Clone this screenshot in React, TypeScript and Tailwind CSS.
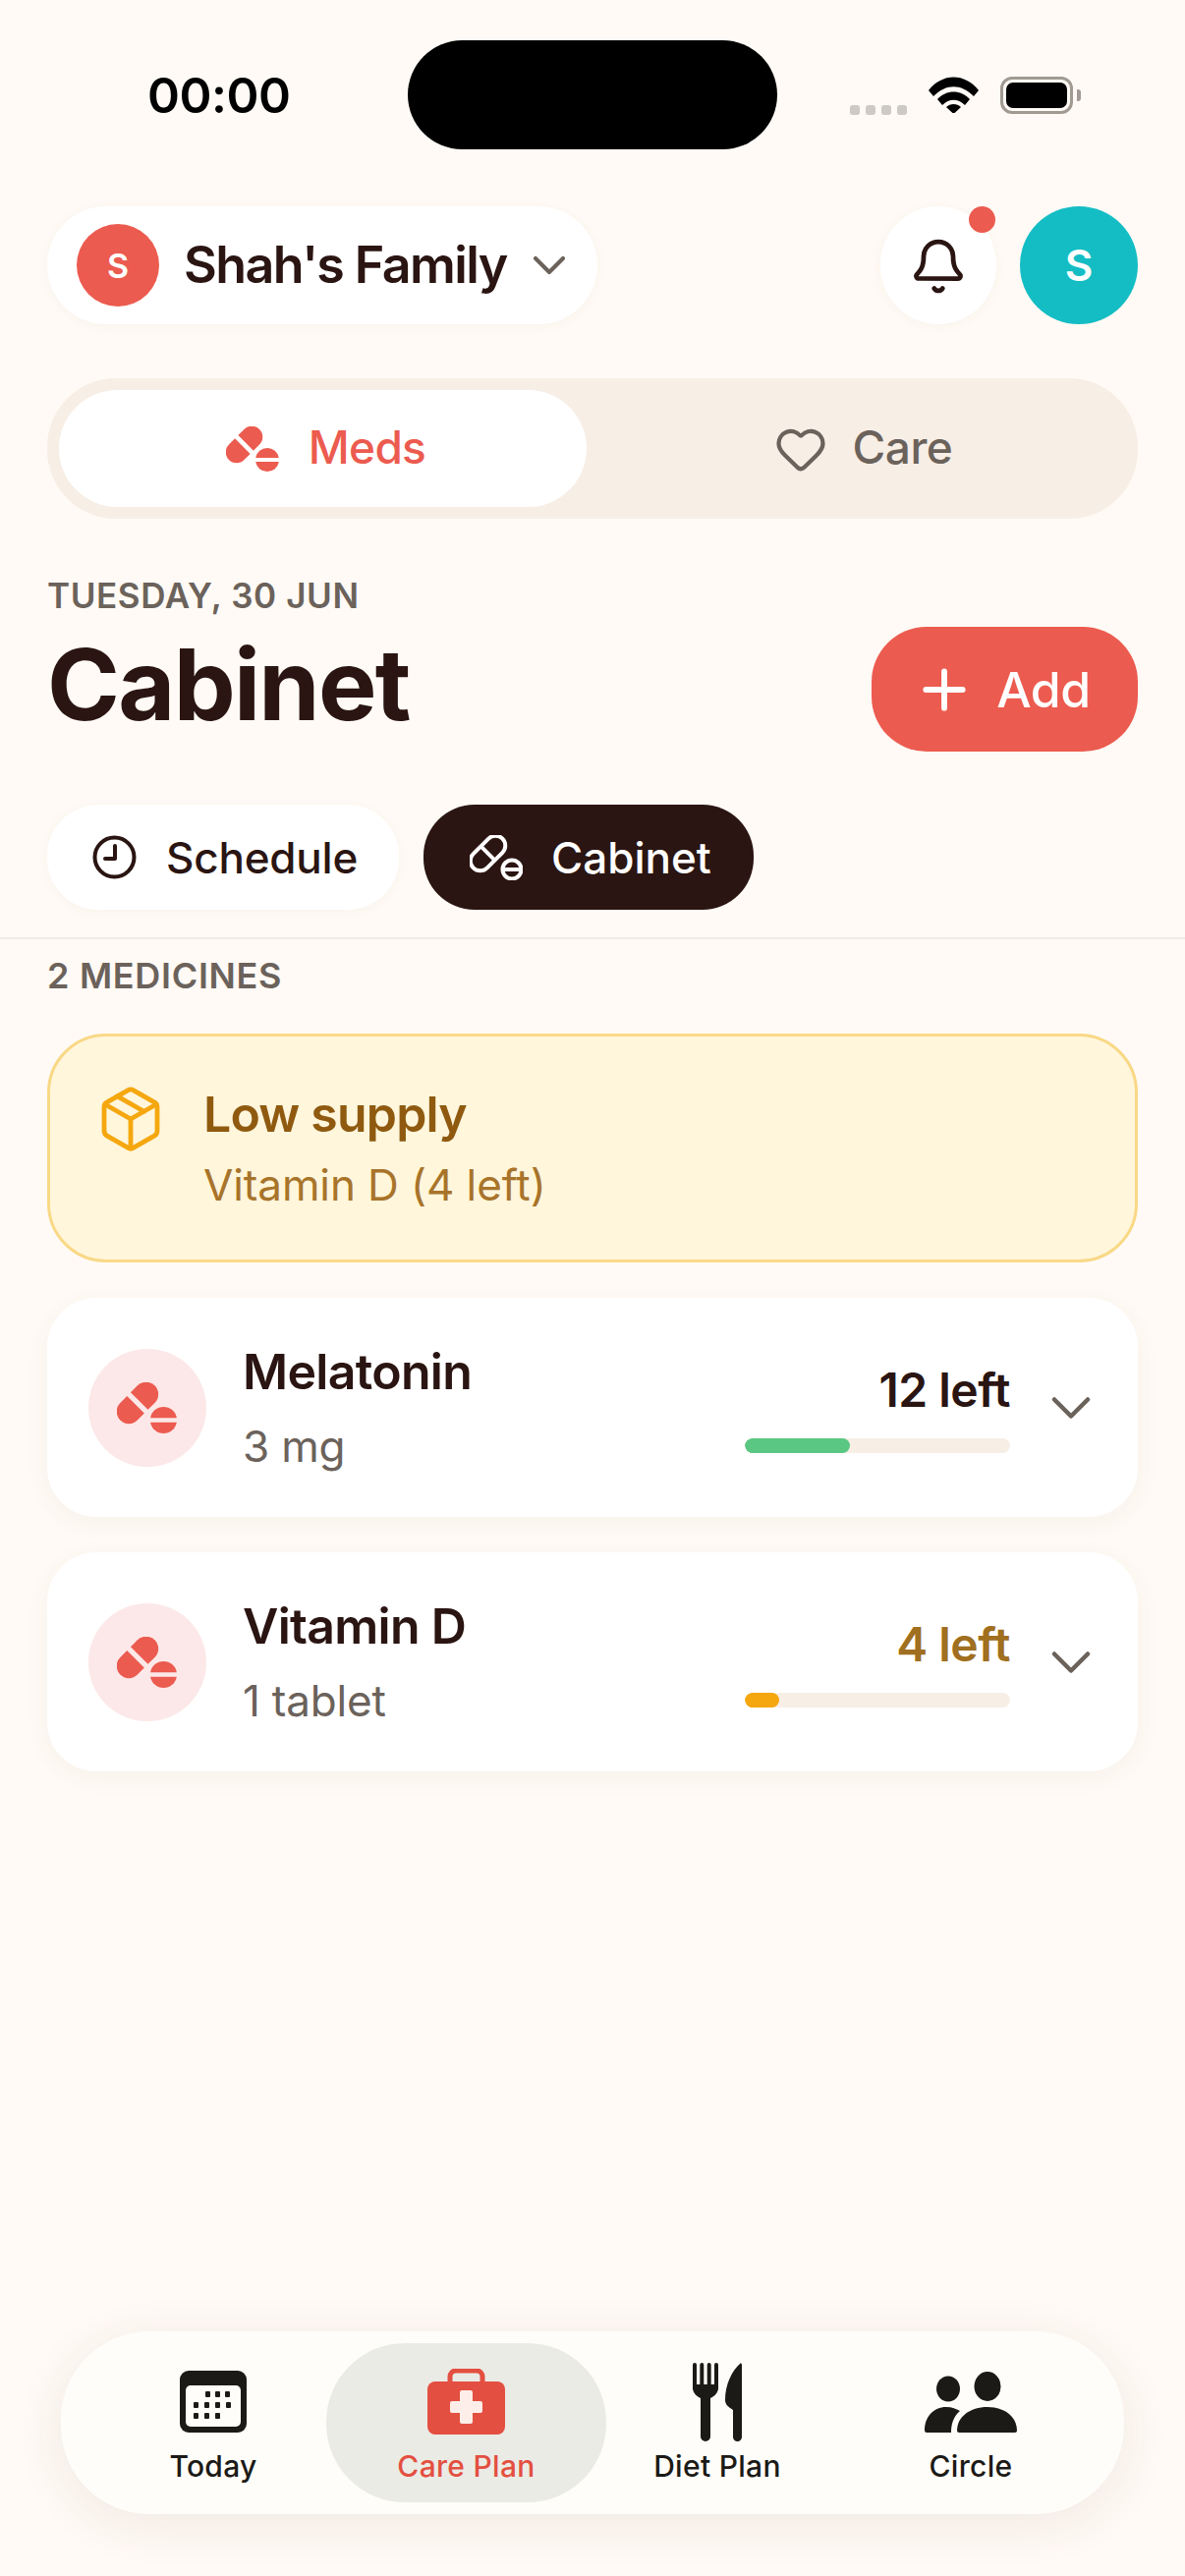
import { Bell, ChevronDown, Heart, Package, Plus } from "lucide-react";

function PillSolid({ className }: { className?: string }) {
  return (
    <svg viewBox="0 0 54 46" fill="currentColor" className={className}>
      <g transform="rotate(-45 18.5 18.5)">
        <path d="M16.2 7.5H7.5a11 11 0 0 0 0 22h8.7Z" />
        <path d="M20.8 7.5h8.7a11 11 0 0 1 0 22h-8.7Z" />
      </g>
      <path d="M30.17 32A12 12 0 0 1 53.83 32Z" />
      <path d="M30.17 36A12 12 0 0 0 53.83 36Z" />
    </svg>
  );
}

function PillOutline({ className }: { className?: string }) {
  return (
    <svg viewBox="0 0 54 46" fill="none" stroke="currentColor" strokeWidth="4" className={className}>
      <g transform="rotate(-45 18.5 18.5)">
        <rect x="-2.5" y="8.5" width="42" height="20" rx="10" />
        <path d="M18.5 8.5v20" />
      </g>
      <circle cx="43" cy="35" r="9.5" />
      <path d="M34 35h18" />
    </svg>
  );
}

function ClockIcon({ className }: { className?: string }) {
  return (
    <svg viewBox="0 0 45 45" fill="none" stroke="currentColor" strokeWidth="4" strokeLinecap="round" strokeLinejoin="round" className={className}>
      <circle cx="22.5" cy="22.5" r="20" />
      <path d="M23 11v13h-10" />
    </svg>
  );
}

function WifiIcon() {
  return (
    <svg viewBox="0 0 51 37" fill="#000" className="h-[37px] w-[51px]">
      <path d="M0 14 C14 -4 37 -4 51 14 L46 20 C33 7 18 7 5 20Z" />
      <path d="M9 23 C18 13 33 13 42 23 L37 29 C30 22 21 22 14 29Z" />
      <path d="M18 31 C22 27 29 27 33 31 L25.5 38Z" />
    </svg>
  );
}

function CalendarIcon() {
  const rows = [
    [26, 36, 46],
    [14, 25, 36, 47],
    [14, 25, 36],
  ];
  return (
    <svg viewBox="0 0 68 63" className="h-[63px] w-[68px]">
      <rect width="68" height="63" rx="9" fill="#1b1a17" />
      <rect x="6" y="15" width="56" height="42" rx="5" fill="#fffdf9" />
      {rows.map((xs, i) =>
        xs.map((x) => <rect key={`${i}-${x}`} x={x} y={21 + i * 11} width="5" height="6" rx="1" fill="#1b1a17" />),
      )}
    </svg>
  );
}

function CareIcon() {
  return (
    <svg viewBox="0 0 79 67" className="h-[67px] w-[79px]">
      <path d="M23 16V8a6 6 0 0 1 6-6h21a6 6 0 0 1 6 6v8" fill="none" stroke="#e34f40" strokeWidth="5" />
      <rect y="13" width="79" height="54" rx="8" fill="#e34f40" />
      <path d="M33 24a2 2 0 0 1 2-2h9a2 2 0 0 1 2 2v9h8a2 2 0 0 1 2 2v8a2 2 0 0 1-2 2h-8v9a2 2 0 0 1-2 2h-9a2 2 0 0 1-2-2v-9h-8a2 2 0 0 1-2-2v-8a2 2 0 0 1 2-2h8Z" fill="#fdeee9" />
    </svg>
  );
}

function DietIcon() {
  return (
    <svg viewBox="0 0 50 80" fill="#1b1a17" className="h-[80px] w-[50px]">
      <rect x="0" y="0" width="4" height="28" rx="2" />
      <rect x="7.3" y="0" width="4" height="28" rx="2" />
      <rect x="14.7" y="0" width="4" height="28" rx="2" />
      <rect x="22" y="0" width="4" height="28" rx="2" />
      <path d="M0 22H26V25C26 31 22 34 18 36V75a5 5 0 0 1-10 0V36C4 34 0 31 0 25Z" />
      <path d="M50 2V75.5a4.5 4.5 0 0 1-9 0V48C36 45 33 42 33 38 33 22 40 8 48 1 49 0 50 1 50 2Z" />
    </svg>
  );
}

function PeopleIcon() {
  return (
    <svg viewBox="0 0 94 62" fill="#1b1a17" className="h-[62px] w-[94px]">
      <ellipse cx="24" cy="17.5" rx="12" ry="13" />
      <ellipse cx="64" cy="15" rx="13.5" ry="15" />
      <path d="M0 60C0 46 9 36 22 36c6 0 10 2 14 4C29 46 27 54 27 62H2C1 62 0 61 0 60Z" />
      <path d="M33 60C33 46 46 36 64 36 82 36 94 46 94 60 94 61 93 62 92 62H35C34 62 33 61 33 60Z" />
    </svg>
  );
}

const medicines = [
  { name: "Melatonin", dose: "3 mg", left: "12 left", leftClass: "text-[#2a1512]", fill: "w-[107px] bg-[#5ac782]" },
  { name: "Vitamin D", dose: "1 tablet", left: "4 left", leftClass: "text-[#a06f1f]", fill: "w-[35px] bg-[#f5a70f]" },
];

const navItems = [
  { label: "Today", width: "w-[230px]", icon: <CalendarIcon /> },
  { label: "Care Plan", width: "w-[285px]", active: true, icon: <CareIcon /> },
  { label: "Diet Plan", width: "w-[226px]", icon: <DietIcon /> },
  { label: "Circle", width: "w-[290px]", icon: <PeopleIcon /> },
];

export default function App() {
  return (
    <div className="flex h-[2622px] w-[1206px] flex-col overflow-hidden bg-[#fffaf5] font-['Inter',sans-serif] text-[#2a1512]">
      {/* status bar */}
      <div className="mt-[41px] flex h-[111px] items-center pl-[150px]">
        <div className="w-[265px] text-[50px] font-semibold leading-none tracking-[-0.5px] text-black">00:00</div>
        <div className="h-[111px] w-[376px] rounded-[56px] bg-black" />
        <div className="ml-[74px] flex items-center">
          <div className="mt-[30px] flex gap-[6px]">
            {[0, 1, 2, 3].map((i) => (
              <span key={i} className="h-[10px] w-[10px] rounded-[3px] bg-[#cdc9c4]" />
            ))}
          </div>
          <div className="ml-[22px] mr-[22px]">
            <WifiIcon />
          </div>
          <div className="flex items-center gap-[4px]">
            <div className="h-[38px] w-[74px] rounded-[12px] border-[3px] border-[#a09a93] p-[3px]">
              <div className="h-full w-full rounded-[7px] bg-black" />
            </div>
            <div className="h-[12px] w-[4px] rounded-r-[3px] bg-[#a09a93]" />
          </div>
        </div>
      </div>

      {/* family switcher */}
      <div className="mt-[58px] flex items-center justify-between px-[48px]">
        <div className="flex h-[120px] w-[560px] items-center rounded-[60px] bg-white pl-[30px] shadow-[0_2px_12px_rgba(120,80,50,0.04)]">
          <div className="flex h-[84px] w-[84px] items-center justify-center rounded-full bg-[#ec5b4f] text-[34px] font-semibold text-white">S</div>
          <div className="ml-[25px] text-[52px] font-semibold leading-none tracking-[-1.6px]">Shah's Family</div>
          <ChevronDown size={56} strokeWidth={1.8} className="ml-[15px] text-[#6b625b]" />
        </div>
        <div className="flex items-center gap-[24px]">
          <div className="relative flex h-[120px] w-[118px] items-center justify-center rounded-full bg-white pt-[2px] shadow-[0_2px_12px_rgba(120,80,50,0.04)]">
            <Bell size={60} strokeWidth={1.9} className="text-[#2a1512]" />
            <span className="absolute right-[1px] top-0 h-[27px] w-[27px] rounded-full bg-[#ec5b4f]" />
          </div>
          <div className="flex h-[120px] w-[120px] items-center justify-center rounded-full bg-[#14bdc4] text-[44px] font-semibold text-white">S</div>
        </div>
      </div>

      {/* meds / care */}
      <div className="mx-[48px] mt-[55px] flex h-[143px] items-center rounded-[70px] bg-[#f7eee6] px-[12px]">
        <div className="flex h-[119px] w-[537px] items-center justify-center gap-[30px] rounded-[60px] bg-white pl-[6px] text-[#ec5b4f]">
          <PillSolid className="h-[46px] w-[54px]" />
          <span className="-mt-[3px] text-[46px] font-medium leading-none tracking-[-0.7px]">Meds</span>
        </div>
        <div className="flex flex-1 items-center justify-center gap-[26px] pl-[14px] text-[#6b625b]">
          <Heart size={54} strokeWidth={1.9} />
          <span className="-mt-[3px] text-[46px] font-medium leading-none tracking-[-0.5px]">Care</span>
        </div>
      </div>

      {/* heading */}
      <div className="border-b-2 border-[#efeae4] pb-[28px]">
        <div className="mt-[58px] px-[48px] text-[35px] font-semibold leading-[40px] tracking-[0.6px] text-[#6b625b]">TUESDAY, 30 JUN</div>
        <div className="mt-[12px] flex items-center justify-between px-[48px]">
          <h1 className="-mt-[10px] text-[100px] font-bold leading-none tracking-[-1.7px]">Cabinet</h1>
          <div className="flex h-[127px] w-[271px] items-center justify-center gap-[21px] rounded-[56px] bg-[#ec5b4f] pr-[6px] text-white">
            <Plus size={64} strokeWidth={2.2} />
            <span className="text-[50px] font-medium leading-none tracking-[-0.5px]">Add</span>
          </div>
        </div>
        <div className="mt-[54px] flex gap-[25px] px-[48px]">
          <div className="flex h-[107px] w-[358px] items-center gap-[30px] rounded-[52px] bg-white pl-[46px] shadow-[0_2px_12px_rgba(120,80,50,0.04)]">
            <ClockIcon className="h-[45px] w-[45px]" />
            <span className="text-[44px] font-medium leading-none tracking-[-0.2px]">Schedule</span>
          </div>
          <div className="flex h-[107px] w-[336px] items-center gap-[29px] rounded-[52px] bg-[#2a1512] pl-[47px] text-white">
            <PillOutline className="h-[46px] w-[54px]" />
            <span className="text-[44px] font-medium leading-none">Cabinet</span>
          </div>
        </div>
      </div>

      <div className="mt-[17px] px-[48px] text-[36px] font-semibold leading-[40px] tracking-[0.7px] text-[#6b625b]">2 MEDICINES</div>

      {/* low supply */}
      <div className="mx-[48px] mt-[39px] flex h-[233px] rounded-[60px] border-[3px] border-[#f9d886] bg-[#fff6dc] pl-[46px] pt-[49px]">
        <Package size={72} strokeWidth={1.6} className="-mt-[1px] text-[#f5a70f]" />
        <div className="ml-[38px]">
          <div className="text-[50px] font-semibold leading-[60px] tracking-[-0.8px] text-[#8f5a10]">Low supply</div>
          <div className="mt-[15px] text-[44px] leading-[54px] tracking-[-0.1px] text-[#a8742a]">Vitamin D (4 left)</div>
        </div>
      </div>

      {/* medicine list */}
      <div className="mt-[36px] flex flex-col gap-[36px] px-[48px]">
        {medicines.map((m) => (
          <div key={m.name} className="flex h-[223px] items-center rounded-[50px] bg-white pl-[42px] pr-[34px] shadow-[0_6px_24px_rgba(120,80,50,0.05)]">
            <div className="flex h-[120px] w-[120px] items-center justify-center rounded-full bg-[#fce8e8] pr-[2px] text-[#ec5b4f]">
              <PillSolid className="h-[52px] w-[61px]" />
            </div>
            <div className="ml-[37px] flex-1">
              <div className="-mt-[2px] text-[50px] font-semibold leading-[60px] tracking-[-0.7px]">{m.name}</div>
              <div className="mt-[20px] text-[44px] leading-[52px] tracking-[-0.2px] text-[#6b625b]">{m.dose}</div>
            </div>
            <div className="flex w-[270px] flex-col items-end">
              <div className={`text-[48px] font-semibold leading-[56px] tracking-[-0.5px] ${m.leftClass}`}>{m.left}</div>
              <div className="mt-[21px] h-[15px] w-full overflow-hidden rounded-full bg-[#f7eee6]">
                <div className={`h-full rounded-full ${m.fill}`} />
              </div>
            </div>
            <ChevronDown size={68} strokeWidth={1.6} className="ml-[28px] text-[#6b625b]" />
          </div>
        ))}
      </div>

      {/* bottom nav */}
      <div className="mx-[62px] mb-[63px] mt-auto flex h-[186px] items-center rounded-[90px] bg-[#fffdf9] pl-[40px] shadow-[0_10px_50px_rgba(90,60,40,0.09)]">
        {navItems.map((item) => (
          <div
            key={item.label}
            className={`flex h-[162px] flex-col items-center justify-center ${item.width} ${item.active ? "rounded-[80px] bg-[#ebebe6] text-[#e34f40]" : "text-[#1b1a17]"}`}
          >
            <div className="flex h-[82px] items-center">{item.icon}</div>
            <div className="mt-[5px] text-[30px] font-medium leading-[38px] tracking-[0.3px]">{item.label}</div>
          </div>
        ))}
      </div>
    </div>
  );
}
